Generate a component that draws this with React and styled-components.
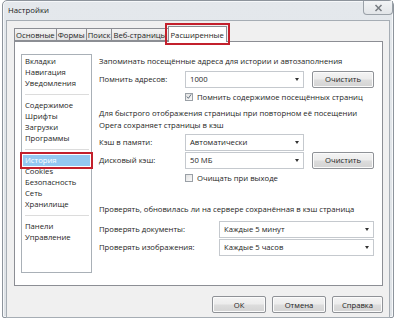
import React from "react";
import styled, { createGlobalStyle } from "styled-components";

const Global = createGlobalStyle`
  html, body { margin: 0; padding: 0; background: #ffffff; }
  body { font-family: "Open Sans", "Noto Sans", sans-serif; font-size: 7.7px; color: #1e1e1e; }
  * { box-sizing: border-box; }
`;

const Window = styled.div`
  width: 392px;
  height: 318px;
  margin-left: 2px;
  border: 1px solid #8d949c;
  border-radius: 5px 5px 2px 2px;
  background: linear-gradient(#e4e8ec, #dfe3e7);
  display: flex;
  flex-direction: column;
  box-shadow: inset 0 0 0 1px #f6f8fa;
`;

const TitleBar = styled.div`
  height: 19px;
  display: flex;
  justify-content: space-between;
  align-items: flex-start;
  padding-left: 5px;
`;

const Title = styled.span`
  font-size: 7.8px;
  line-height: 19px;
  color: #1a1a1a;
`;

const CloseButton = styled.div`
  width: 30px;
  height: 14px;
  margin-right: 0px;
  border: 1px solid #9aa1a8;
  border-top: none;
  border-radius: 0 0 4px 4px;
  background: linear-gradient(#f2f4f6, #e2e5e8);
  display: flex;
  align-items: center;
  justify-content: center;
`;

const Body = styled.div`
  flex: 1;
  margin: 0 3px 2px 3px;
  background: #f0f0f0;
  border: 1px solid #a6adb4;
  padding: 4px 4px 4px 7px;
  display: flex;
  flex-direction: column;
`;

const Tabs = styled.div`
  display: flex;
  align-items: flex-end;
  height: 16px;
  padding-left: 1px;
  position: relative;
  z-index: 1;
`;

const Tab = styled.div`
  height: ${(p) => (p.$active ? "16px" : "13px")};
  padding: 0 ${(p) => (p.$active ? "2px" : "1px")};
  margin-left: -1px;
  border: 1px solid #8c8e94;
  border-bottom: ${(p) => (p.$active ? "none" : "1px solid #8c8e94")};
  background: ${(p) => (p.$active ? "#ffffff" : "linear-gradient(#f4f4f4, #e3e3e3)")};
  display: flex;
  align-items: center;
  white-space: nowrap;
  outline: ${(p) => (p.$active ? "2px solid #c3202c" : "none")};
  outline-offset: 1px;
  margin-bottom: ${(p) => (p.$active ? "-1px" : "0")};
  color: #1e1e1e;
`;

const Panel = styled.div`
  height: 245px;
  border: 1px solid #8c8e94;
  background: #ffffff;
  margin-right: 2px;
  padding: 12px 6px 12px 6px;
  display: flex;
  gap: 7px;
`;

const List = styled.div`
  width: 71px;
  border: 1px solid #a9b0b7;
  padding: 1px 1px;
  display: flex;
  flex-direction: column;
`;

const ListItem = styled.div`
  height: 11px;
  line-height: 11px;
  padding-left: 2px;
  white-space: nowrap;
  background: ${(p) => (p.$selected ? "#93c8f1" : "transparent")};
  color: ${(p) => (p.$selected ? "#ffffff" : "#1e1e1e")};
  outline: ${(p) => (p.$selected ? "2px solid #c3202c" : "none")};
  outline-offset: 1px;
`;

const Separator = styled.div`
  height: 11px;
  display: flex;
  align-items: center;
  padding: 0 1px 0 2px;
  &::after {
    content: "";
    flex: 1;
    height: 1px;
    background: #dcdcdc;
  }
`;

const Content = styled.div`
  flex: 1;
  display: flex;
  flex-direction: column;
  padding-top: 1px;
`;

const Text = styled.div`
  line-height: 12px;
  white-space: nowrap;
  margin-top: ${(p) => p.$mt || 0}px;
`;

const Row = styled.div`
  display: flex;
  align-items: center;
  height: 18px;
  margin-top: ${(p) => p.$mt || 0}px;
`;

const Label = styled.div`
  width: ${(p) => p.$w}px;
  flex-shrink: 0;
  white-space: nowrap;
`;

const Select = styled.div`
  width: ${(p) => p.$w}px;
  height: 17px;
  border: 1px solid #c5c9ce;
  background: #ffffff;
  display: flex;
  align-items: center;
  justify-content: space-between;
  padding: 0 4px 0 4px;
  white-space: nowrap;
`;

const Arrow = styled.span`
  width: 0;
  height: 0;
  border-left: 2.5px solid transparent;
  border-right: 2.5px solid transparent;
  border-top: 3px solid #333;
`;

const Button = styled.div`
  width: ${(p) => p.$w}px;
  height: 17px;
  margin-left: ${(p) => p.$ml || 0}px;
  border: 1px solid #8f9297;
  border-radius: 2px;
  background: linear-gradient(#f4f4f4 0%, #ececec 48%, #dddddd 52%, #d3d3d3 100%);
  box-shadow: inset 0 0 0 1px #fbfbfb;
  display: flex;
  align-items: center;
  justify-content: center;
  white-space: nowrap;
`;

const CheckRow = styled.div`
  display: flex;
  align-items: center;
  height: 17px;
  padding-left: 86px;
  gap: 4px;
`;

const Box = styled.div`
  width: 8px;
  height: 8px;
  border: 1px solid #9aa0a6;
  background: linear-gradient(135deg, #e2e2e2, #fafafa);
  display: flex;
  align-items: center;
  justify-content: center;
`;

const Footer = styled.div`
  display: flex;
  justify-content: flex-end;
  gap: 6px;
  margin-top: 10px;
  padding-right: 2px;
`;

function Check({ checked }) {
  return (
    <Box>
      {checked && (
        <svg width="7" height="7" viewBox="0 0 7 7">
          <path d="M1 3.6 L2.8 5.6 L6 1" fill="none" stroke="#4a5a6a" strokeWidth="1" />
        </svg>
      )}
    </Box>
  );
}

export default function App() {
  return (
    <>
      <Global />
      <Window>
        <TitleBar>
          <Title>Настройки</Title>
          <CloseButton>
            <svg width="9" height="8" viewBox="0 0 9 8">
              <path d="M1.5 1 L7.5 7 M7.5 1 L1.5 7" stroke="#767b81" strokeWidth="1.5" />
            </svg>
          </CloseButton>
        </TitleBar>
        <Body>
          <Tabs>
            <Tab>Основные</Tab>
            <Tab>Формы</Tab>
            <Tab>Поиск</Tab>
            <Tab>Веб-страницы</Tab>
            <Tab $active>Расширенные</Tab>
          </Tabs>
          <Panel>
            <List>
              <ListItem>Вкладки</ListItem>
              <ListItem>Навигация</ListItem>
              <ListItem>Уведомления</ListItem>
              <Separator />
              <ListItem>Содержимое</ListItem>
              <ListItem>Шрифты</ListItem>
              <ListItem>Загрузки</ListItem>
              <ListItem>Программы</ListItem>
              <Separator />
              <ListItem $selected>История</ListItem>
              <ListItem>Cookies</ListItem>
              <ListItem>Безопасность</ListItem>
              <ListItem>Сеть</ListItem>
              <ListItem>Хранилище</ListItem>
              <Separator />
              <ListItem>Панели</ListItem>
              <ListItem>Управление</ListItem>
            </List>
            <Content>
              <Text>Запоминать посещённые адреса для истории и автозаполнения</Text>
              <Row $mt={3}>
                <Label $w={86}>Помнить адресов:</Label>
                <Select $w={119}>
                  1000
                  <Arrow />
                </Select>
                <Button $w={62} $ml={8}>Очистить</Button>
              </Row>
              <CheckRow>
                <Check checked />
                Помнить содержимое посещённых страниц
              </CheckRow>
              <Text $mt={2}>Для быстрого отображения страницы при повторном её посещении</Text>
              <Text>Opera сохраняет страницы в кэш</Text>
              <Row $mt={2}>
                <Label $w={86}>Кэш в памяти:</Label>
                <Select $w={119}>
                  Автоматически
                  <Arrow />
                </Select>
              </Row>
              <Row>
                <Label $w={86}>Дисковый кэш:</Label>
                <Select $w={119}>
                  50 МБ
                  <Arrow />
                </Select>
                <Button $w={62} $ml={8}>Очистить</Button>
              </Row>
              <CheckRow>
                <Check />
                Очищать при выходе
              </CheckRow>
              <Text $mt={17}>Проверять, обновилась ли на сервере сохранённая в кэш страница</Text>
              <Row $mt={5}>
                <Label $w={120}>Проверять документы:</Label>
                <Select $w={155}>
                  Каждые 5 минут
                  <Arrow />
                </Select>
              </Row>
              <Row>
                <Label $w={120}>Проверять изображения:</Label>
                <Select $w={155}>
                  Каждые 5 часов
                  <Arrow />
                </Select>
              </Row>
            </Content>
          </Panel>
          <Footer>
            <Button $w={54}>ОК</Button>
            <Button $w={54}>Отмена</Button>
            <Button $w={51}>Справка</Button>
          </Footer>
        </Body>
      </Window>
    </>
  );
}
